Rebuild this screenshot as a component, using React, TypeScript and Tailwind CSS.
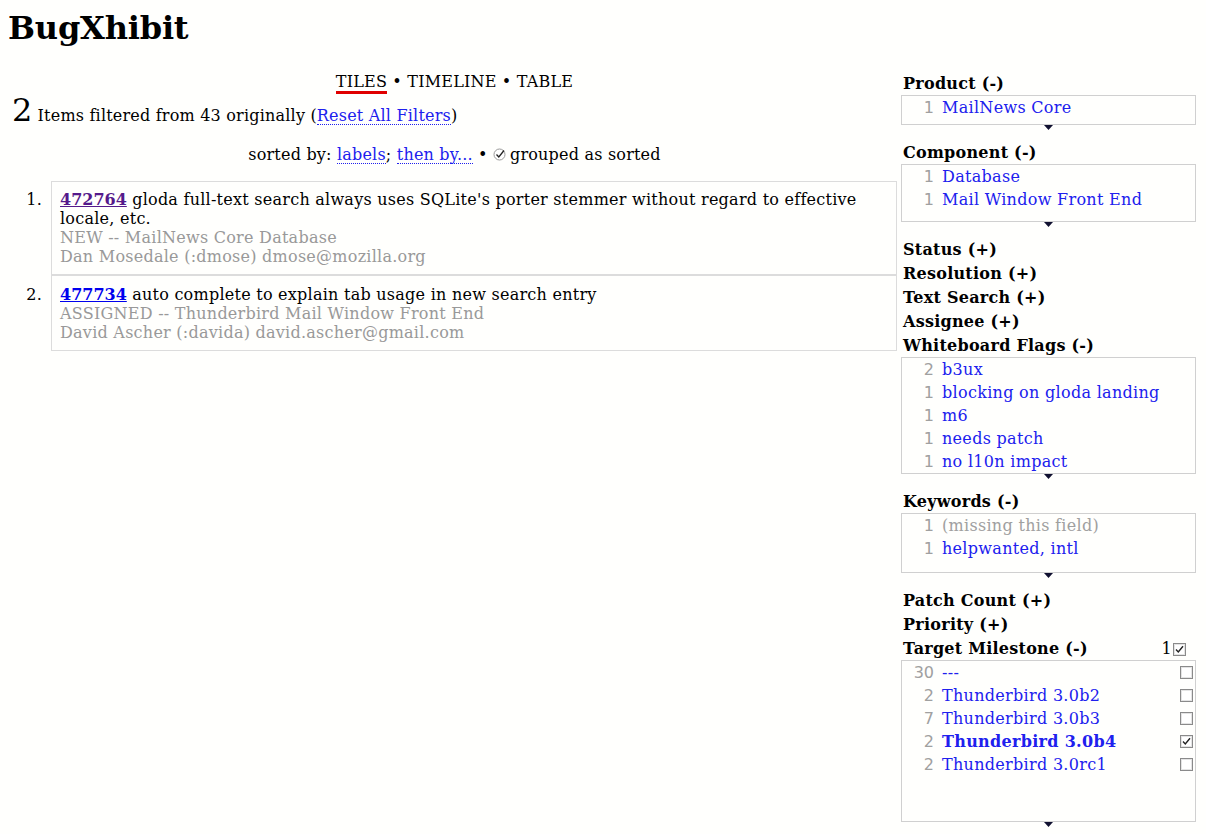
import React from "react";

const serif = { fontFamily: '"DejaVu Serif", serif' };
const sans = { fontFamily: '"DejaVu Sans", sans-serif' };

function Check({ checked }: { checked?: boolean }) {
  return (
    <svg width="13" height="13" viewBox="0 0 13 13" className="block">
      <rect x="0.5" y="0.5" width="12" height="12" fill="#fff" stroke="#8a8a8a" />
      <rect x="1.5" y="1.5" width="10" height="10" fill="none" stroke="#e4e4e4" />
      {checked && <path d="M3 6.5 L5.3 9 L10 3.2" fill="none" stroke="#222" strokeWidth="1.4" />}
    </svg>
  );
}

function Arrow() {
  return (
    <div className="h-[15px] flex justify-center">
      <svg width="9" height="5" viewBox="0 0 9 5" className="block">
        <path d="M0 0 H9 L4.5 5 Z" fill="#101030" />
      </svg>
    </div>
  );
}

type Item = { n: string; label: string; missing?: boolean; bold?: boolean; check?: boolean };

function Header({ title, right }: { title: string; right?: React.ReactNode }) {
  return (
    <div className="h-[24px] flex items-center justify-between pt-[2px] pl-[2px] pr-[10px] text-[16px] font-bold text-black tracking-[0.25px]" style={serif}>
      <span>{title}</span>
      {right}
    </div>
  );
}

function Facet({ title, items, h, checks, right }: { title: string; items: Item[]; h: number; checks?: boolean; right?: React.ReactNode }) {
  return (
    <div>
      <Header title={title} right={right} />
      <div className="border border-[#d0d0d0]" style={{ height: h }}>
        {items.map((it, i) => (
          <div key={i} className="h-[23px] flex items-center text-[16px]">
            <span className="w-[32px] text-right text-[#a0a0a0]" style={sans}>{it.n}</span>
            <span
              className={`ml-[8px] flex-1 tracking-[0.3px] ${it.missing ? "text-[#a0a0a0]" : "text-[#2020ee]"} ${it.bold ? "font-bold" : ""}`}
              style={serif}
            >
              {it.label}
            </span>
            {checks && (
              <span className="mr-[2px]">
                <Check checked={it.check} />
              </span>
            )}
          </div>
        ))}
      </div>
      <Arrow />
    </div>
  );
}

export default function App() {
  return (
    <div className="min-h-[834px] bg-[#fffffd] text-black" style={serif}>
      <h1 className="pt-[10px] pl-[8px] text-[32px] font-bold leading-[37px] h-[71px] tracking-[-0.2px]" style={serif}>
        BugXhibit
      </h1>
      <div className="flex">
        <div className="flex-1 pr-[4px] tracking-[0.2px]">
          <div className="flex justify-center pl-[12px] h-[21px] pt-[1px] text-[16px] leading-[19px]">
            <span className="border-b-[3px] border-[#e00000] h-[22px]">TILES</span>
            <span className="whitespace-pre"> • TIMELINE • TABLE</span>
          </div>
          <div className="pl-[12px] h-[37px] leading-[37px] text-[16px]">
            <span className="text-[32px] mr-[5px]">2</span>
            Items filtered from 43 originally (
            <span className="text-[#2020ee] border-b border-dotted border-[#2020ee] leading-[17px] inline-block">Reset All Filters</span>)
          </div>
          <div className="mt-[16px] flex justify-center items-center pl-[12px] h-[19px] text-[16px] leading-[19px]">
            <span className="whitespace-pre">sorted by: </span>
            <span className="text-[#2020ee] border-b border-dotted border-[#2020ee] leading-[17px]">labels</span>
            <span className="whitespace-pre">; </span>
            <span className="text-[#2020ee] border-b border-dotted border-[#2020ee] leading-[17px]">then by...</span>
            <span className="whitespace-pre"> • </span>
            <svg width="13" height="13" viewBox="0 0 13 13" className="mr-[4px]">
              <circle cx="6.5" cy="6.5" r="5.5" fill="#fff" stroke="#999" />
              <path d="M3.5 6.5 L5.8 9 L11 2.5" fill="none" stroke="#222" strokeWidth="1.3" />
            </svg>
            <span>grouped as sorted</span>
          </div>
          <ol className="mt-[17px] text-[16px] leading-[19px] tracking-[0.25px]">
            <li className="flex">
              <span className="w-[51px] pr-[9px] text-right pt-[9px]">1.</span>
              <div className="flex-1 border border-[#dcdcdc] pl-[8px] pr-[8px] pt-[8px] pb-[8px]">
                <div>
                  <a className="font-bold underline text-[#551a8b] tracking-normal">472764</a> gloda full-text search always uses SQLite's porter stemmer without regard to effective locale, etc.
                </div>
                <div className="text-[#999]">NEW -- MailNews Core Database</div>
                <div className="text-[#999]">Dan Mosedale (:dmose) dmose@mozilla.org</div>
              </div>
            </li>
            <li className="flex">
              <span className="w-[51px] pr-[9px] text-right pt-[10px]">2.</span>
              <div className="flex-1 border border-[#dcdcdc] pl-[8px] pr-[8px] pt-[9px] pb-[8px]">
                <div>
                  <a className="font-bold underline text-[#0000ee] tracking-normal">477734</a> auto complete to explain tab usage in new search entry
                </div>
                <div className="text-[#999]">ASSIGNED -- Thunderbird Mail Window Front End</div>
                <div className="text-[#999]">David Ascher (:davida) david.ascher@gmail.com</div>
              </div>
            </li>
          </ol>
        </div>
        <div className="w-[295px] mr-[10px]">
          <Facet title="Product (-)" h={30} items={[{ n: "1", label: "MailNews Core" }]} />
          <Facet
            title="Component (-)"
            h={58}
            items={[
              { n: "1", label: "Database" },
              { n: "1", label: "Mail Window Front End" },
            ]}
          />
          <Header title="Status (+)" />
          <Header title="Resolution (+)" />
          <Header title="Text Search (+)" />
          <Header title="Assignee (+)" />
          <Facet
            title="Whiteboard Flags (-)"
            h={117}
            items={[
              { n: "2", label: "b3ux" },
              { n: "1", label: "blocking on gloda landing" },
              { n: "1", label: "m6" },
              { n: "1", label: "needs patch" },
              { n: "1", label: "no l10n impact" },
            ]}
          />
          <Facet
            title="Keywords (-)"
            h={60}
            items={[
              { n: "1", label: "(missing this field)", missing: true },
              { n: "1", label: "helpwanted, intl" },
            ]}
          />
          <Header title="Patch Count (+)" />
          <Header title="Priority (+)" />
          <Facet
            title="Target Milestone (-)"
            h={162}
            checks
            right={
              <span className="flex items-center font-normal">
                <span className="mr-[1px]">1</span>
                <Check checked />
              </span>
            }
            items={[
              { n: "30", label: "---" },
              { n: "2", label: "Thunderbird 3.0b2" },
              { n: "7", label: "Thunderbird 3.0b3" },
              { n: "2", label: "Thunderbird 3.0b4", bold: true, check: true },
              { n: "2", label: "Thunderbird 3.0rc1" },
            ]}
          />
        </div>
      </div>
    </div>
  );
}
